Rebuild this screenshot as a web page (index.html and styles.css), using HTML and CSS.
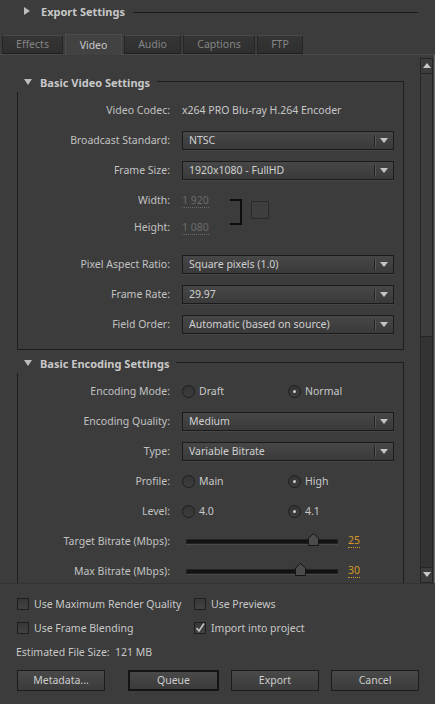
FILE: index.html
```html
<!DOCTYPE html>
<html lang="en">
<head>
    <meta charset="UTF-8">
    <title>Export Settings</title>
    <link rel="stylesheet" href="styles.css">
</head>
<body>
    <div class="window">
        <div class="header">
            <span class="tri-right"></span>
            <span class="header-title">Export Settings</span>
            <span class="header-line"></span>
        </div>

        <div class="tabs">
            <div class="tab tab-effects">Effects</div>
            <div class="tab tab-video active">Video</div>
            <div class="tab tab-audio">Audio</div>
            <div class="tab tab-captions">Captions</div>
            <div class="tab tab-ftp">FTP</div>
        </div>

        <div class="scroll">
            <div class="content">
                <div class="group">
                    <div class="group-head">
                        <span class="tri-down"></span>
                        <span class="group-title">Basic Video Settings</span>
                    </div>
                    <div class="group-body">
                        <div class="row">
                            <div class="label">Video Codec:</div>
                            <div class="plain">x264 PRO Blu-ray H.264 Encoder</div>
                        </div>
                        <div class="row">
                            <div class="label">Broadcast Standard:</div>
                            <div class="select"><span class="select-text">NTSC</span><span class="select-arrow"></span></div>
                        </div>
                        <div class="row">
                            <div class="label">Frame Size:</div>
                            <div class="select"><span class="select-text">1920x1080 - FullHD</span><span class="select-arrow"></span></div>
                        </div>
                        <div class="dims">
                            <div class="dims-rows">
                                <div class="row row-dim">
                                    <div class="label">Width:</div>
                                    <div><span class="dim-value">1 920</span></div>
                                </div>
                                <div class="row row-dim">
                                    <div class="label">Height:</div>
                                    <div><span class="dim-value">1 080</span></div>
                                </div>
                            </div>
                            <div class="bracket"></div>
                            <div class="link-box"></div>
                        </div>
                        <div class="row">
                            <div class="label">Pixel Aspect Ratio:</div>
                            <div class="select"><span class="select-text">Square pixels (1.0)</span><span class="select-arrow"></span></div>
                        </div>
                        <div class="row">
                            <div class="label">Frame Rate:</div>
                            <div class="select"><span class="select-text">29.97</span><span class="select-arrow"></span></div>
                        </div>
                        <div class="row">
                            <div class="label">Field Order:</div>
                            <div class="select"><span class="select-text">Automatic (based on source)</span><span class="select-arrow"></span></div>
                        </div>
                    </div>
                </div>

                <div class="group group-open">
                    <div class="group-head">
                        <span class="tri-down"></span>
                        <span class="group-title">Basic Encoding Settings</span>
                    </div>
                    <div class="group-body">
                        <div class="row">
                            <div class="label">Encoding Mode:</div>
                            <div class="radios">
                                <div class="radio"><span class="radio-dot"></span>Draft</div>
                                <div class="radio"><span class="radio-dot checked"></span>Normal</div>
                            </div>
                        </div>
                        <div class="row">
                            <div class="label">Encoding Quality:</div>
                            <div class="select"><span class="select-text">Medium</span><span class="select-arrow"></span></div>
                        </div>
                        <div class="row">
                            <div class="label">Type:</div>
                            <div class="select"><span class="select-text">Variable Bitrate</span><span class="select-arrow"></span></div>
                        </div>
                        <div class="row">
                            <div class="label">Profile:</div>
                            <div class="radios">
                                <div class="radio"><span class="radio-dot"></span>Main</div>
                                <div class="radio"><span class="radio-dot checked"></span>High</div>
                            </div>
                        </div>
                        <div class="row">
                            <div class="label">Level:</div>
                            <div class="radios">
                                <div class="radio"><span class="radio-dot"></span>4.0</div>
                                <div class="radio"><span class="radio-dot checked"></span>4.1</div>
                            </div>
                        </div>
                        <div class="row">
                            <div class="label">Target Bitrate (Mbps):</div>
                            <div class="slider">
                                <div class="track">
                                    <svg class="thumb" style="left: 121px" width="11" height="13" viewBox="0 0 11 13"><path d="M5.5 0.5 L10.5 5 L10.5 12.5 L0.5 12.5 L0.5 5 Z" fill="#4b4b4b" stroke="#151515"/></svg>
                                </div>
                                <span class="slider-value">25</span>
                            </div>
                        </div>
                        <div class="row">
                            <div class="label">Max Bitrate (Mbps):</div>
                            <div class="slider">
                                <div class="track">
                                    <svg class="thumb" style="left: 108px" width="11" height="13" viewBox="0 0 11 13"><path d="M5.5 0.5 L10.5 5 L10.5 12.5 L0.5 12.5 L0.5 5 Z" fill="#4b4b4b" stroke="#151515"/></svg>
                                </div>
                                <span class="slider-value">30</span>
                            </div>
                        </div>
                    </div>
                </div>
            </div>

            <div class="scrollbar">
                <div class="sb-button"><span class="sb-up"></span></div>
                <div class="sb-thumb"></div>
                <div class="sb-track"></div>
                <div class="sb-button"><span class="sb-down"></span></div>
            </div>
        </div>

        <div class="footer">
            <div class="checks">
                <div class="check"><span class="box"></span><span class="check-text">Use Maximum Render Quality</span></div>
                <div class="check"><span class="box"></span><span class="check-text">Use Previews</span></div>
                <div class="check"><span class="box"></span><span class="check-text">Use Frame Blending</span></div>
                <div class="check">
                    <span class="box"><svg width="10" height="10" viewBox="0 0 10 10"><path d="M1.5 5 L4 8 L9 0.5" fill="none" stroke="#c4c4c4" stroke-width="1.6"/></svg></span><span class="check-text">Import into project</span>
                </div>
            </div>
            <div class="estimate">Estimated File Size:&nbsp;&nbsp;121 MB</div>
            <div class="buttons">
                <div class="button">Metadata...</div>
                <div class="button default">Queue</div>
                <div class="button">Export</div>
                <div class="button">Cancel</div>
            </div>
        </div>
    </div>
</body>
</html>
```

FILE: styles.css
```css
body {
    margin: 0;
    background-color: #3c3c3c;
    font-family: "Noto Sans", sans-serif;
    font-size: 10.5px;
    color: #c2c2c2;
}
.window {
    width: 435px;
    height: 704px;
    overflow: hidden;
}
.header {
    display: flex;
    align-items: center;
    height: 22px;
    padding-left: 24px;
}
.tri-right {
    width: 0;
    height: 0;
    border-top: 4px solid transparent;
    border-bottom: 4px solid transparent;
    border-left: 6px solid #bdbdbd;
    margin-right: 11px;
}
.header-title {
    font-weight: bold;
    font-size: 11px;
    color: #c8c8c8;
}
.header-line {
    flex: 1;
    height: 1px;
    background-color: #1c1c1c;
    margin: 2px 17px 0 8px;
}
.tabs {
    display: flex;
    align-items: flex-end;
    gap: 2px;
    height: 32px;
    padding-left: 2px;
    border-bottom: 1px solid #4a4a4a;
}
.tab {
    height: 17px;
    line-height: 17px;
    text-align: center;
    color: #858585;
    background: linear-gradient(#353535, #2f2f2f);
    border: 1px solid #262626;
    border-top-color: #4a4a4a;
    border-bottom: 1px solid #1e1e1e;
}
.tab.active {
    height: 20px;
    line-height: 20px;
    color: #c8c8c8;
    background: #424242;
    border-color: #4c4c4c;
    border-bottom: none;
    margin-bottom: -1px;
}
.tab-effects { width: 59px; }
.tab-video { width: 55px; }
.tab-audio { width: 55px; }
.tab-captions { width: 70px; }
.tab-ftp { width: 44px; }
.scroll {
    display: flex;
    height: 528px;
    border-right: 1px solid #6c6c6c;
}
.content {
    flex: 1;
    overflow: hidden;
    padding-top: 17px;
}
.group {
    width: 387px;
    margin-left: 17px;
}
.group + .group {
    margin-top: 3px;
}
.group-head {
    display: flex;
    align-items: center;
    height: 20px;
    padding-left: 7px;
}
.group-head::after {
    content: '';
    flex: 1;
    align-self: flex-end;
    height: 10px;
    margin-left: 7px;
    border-top: 1px solid #1e1e1e;
    border-right: 1px solid #1e1e1e;
}
.tri-down {
    width: 0;
    height: 0;
    border-left: 4px solid transparent;
    border-right: 4px solid transparent;
    border-top: 6px solid #bdbdbd;
    margin-right: 8px;
}
.group-title {
    font-weight: bold;
    font-size: 11px;
    color: #c8c8c8;
}
.group-body {
    border-left: 1px solid #1e1e1e;
    border-right: 1px solid #1e1e1e;
    border-bottom: 1px solid #1e1e1e;
    padding: 3px 0 10px;
}
.group-open .group-body {
    border-bottom: none;
}
.row {
    display: grid;
    grid-template-columns: 152px 212px;
    column-gap: 12px;
    align-items: center;
    height: 30px;
}
.label {
    text-align: right;
    white-space: nowrap;
}
.plain {
    color: #c8c8c8;
}
.select {
    display: flex;
    align-items: center;
    height: 17px;
    border: 1px solid #1b1b1b;
    background: linear-gradient(#474747, #3a3a3a);
    box-shadow: 0 1px 0 #464646;
    color: #d0d0d0;
}
.select-text {
    flex: 1;
    padding-left: 6px;
    white-space: nowrap;
}
.select-arrow {
    position: relative;
    width: 18px;
    height: 11px;
    border-left: 1px solid #222;
    box-shadow: inset 1px 0 0 #575757;
}
.select-arrow::after {
    content: '';
    position: absolute;
    left: 5px;
    top: 3px;
    border-left: 4px solid transparent;
    border-right: 4px solid transparent;
    border-top: 5px solid #c4c4c4;
}
.dims {
    display: flex;
    align-items: flex-start;
    height: 64px;
}
.dims-rows {
    padding-top: 1px;
}
.row-dim {
    height: 27px;
}
.dim-value {
    color: #6a6a6a;
    border-bottom: 1px dotted #6a6a6a;
}
.bracket {
    width: 10px;
    height: 22px;
    margin: 14px 0 0 -164px;
    border: 2px solid #0e0e0e;
    border-left: none;
}
.link-box {
    width: 16px;
    height: 16px;
    margin: 16px 0 0 9px;
    border: 1px solid #2a2a2a;
    background-color: #3e3e3e;
}
.radios {
    display: flex;
}
.radio {
    display: flex;
    align-items: center;
    width: 107px;
    color: #c8c8c8;
}
.radio-dot {
    position: relative;
    width: 11px;
    height: 11px;
    margin-right: 4px;
    border: 1px solid #1e1e1e;
    border-radius: 50%;
    background: linear-gradient(#343434, #3e3e3e);
}
.radio-dot.checked::after {
    content: '';
    position: absolute;
    left: 4px;
    top: 4px;
    width: 3px;
    height: 3px;
    border-radius: 50%;
    background-color: #cfcfcf;
}
.slider {
    display: flex;
    align-items: center;
}
.track {
    position: relative;
    width: 150px;
    height: 3px;
    margin-left: 4px;
    background-color: #121212;
    border: 1px solid #222;
    box-shadow: 0 1px 0 #4a4a4a;
}
.thumb {
    position: absolute;
    top: -7px;
}
.slider-value {
    margin-left: 10px;
    color: #d49a2a;
    border-bottom: 1px dotted #d49a2a;
    line-height: 13px;
}
.scrollbar {
    display: flex;
    flex-direction: column;
    width: 13px;
    margin: 3px 1px 0 0;
}
.sb-button {
    position: relative;
    height: 14px;
    border: 1px solid #262626;
    background-color: #3c3c3c;
}
.sb-up, .sb-down {
    position: absolute;
    left: 2px;
    top: 4px;
    border-left: 4px solid transparent;
    border-right: 4px solid transparent;
}
.sb-up {
    border-bottom: 5px solid #c8c8c8;
}
.sb-down {
    border-top: 5px solid #c8c8c8;
}
.sb-thumb {
    height: 262px;
    border: 1px solid #262626;
    border-top: none;
    background-color: #3d3d3d;
}
.sb-track {
    flex: 1;
    border-left: 1px solid #262626;
    border-right: 1px solid #262626;
    background-color: #333;
}
.footer {
    border-top: 1px solid #333;
    padding: 8px 0 0 17px;
}
.checks {
    display: grid;
    grid-template-columns: 177px 200px;
}
.check {
    display: flex;
    align-items: center;
    height: 24px;
    color: #c8c8c8;
}
.check-text {
    white-space: nowrap;
    line-height: 14px;
}
.box {
    display: flex;
    align-items: center;
    justify-content: center;
    flex: none;
    width: 10px;
    height: 10px;
    margin-right: 5px;
    border: 1px solid #1e1e1e;
    background: linear-gradient(#373737, #424242);
}
.estimate {
    height: 24px;
    line-height: 24px;
    margin-left: -1px;
    color: #c8c8c8;
}
.buttons {
    display: flex;
    margin-top: 6px;
}
.button {
    width: 86px;
    height: 19px;
    line-height: 19px;
    text-align: center;
    color: #cccccc;
    border: 1px solid #1c1c1c;
    background: linear-gradient(#494949, #3b3b3b);
}
.button + .button {
    margin-left: 12px;
}
.button.default {
    width: 87px;
    height: 17px;
    line-height: 17px;
    border: 2px solid #141414;
    margin-left: 23px;
}
```
